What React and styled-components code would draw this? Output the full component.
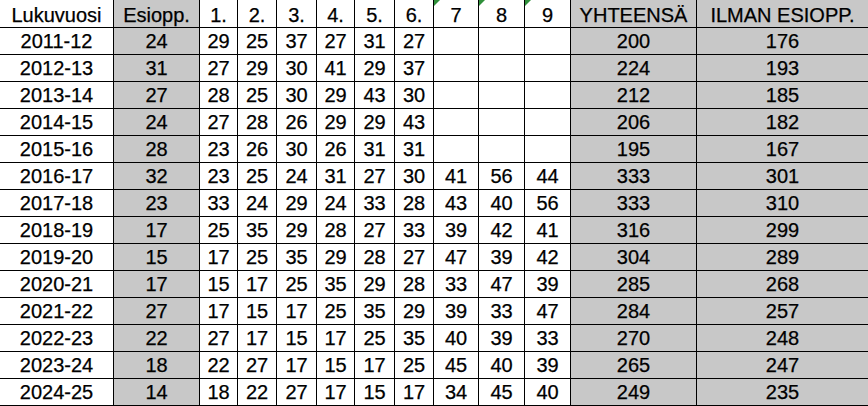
import styled, { createGlobalStyle } from "styled-components";

const GlobalStyle = createGlobalStyle`
  html, body {
    margin: 0;
    padding: 0;
    background: #ffffff;
  }
  body {
    font-family: "Liberation Sans", Arial, sans-serif;
  }
`;

const COLUMNS = [113, 85, 37, 38, 39, 37, 39, 38, 44, 45, 45, 125, 171];

const Sheet = styled.div`
  display: grid;
  grid-template-columns: ${COLUMNS.map((w) => `${w}px`).join(" ")};
  grid-template-rows: 27px;
  grid-auto-rows: 26px;
  gap: 1px;
  padding-bottom: 1px;
  width: 868px;
  background: #000;
`;

const Cell = styled.div`
  position: relative;
  background: ${(props) => (props.shaded ? "#c8c8c8" : "#ffffff")};
  color: #000;
  font-size: 20px;
  line-height: ${(props) => (props.head ? "24px" : "26px")};
  padding-top: ${(props) => (props.head ? "3px" : "0")};
  text-align: center;
  white-space: nowrap;
  overflow: hidden;
  box-sizing: border-box;
  -webkit-text-stroke: 0.25px #000;
`;

// the little green corner Excel puts on "number stored as text" cells
const Flag = styled.span`
  position: absolute;
  top: 0;
  left: 0;
  width: 0;
  height: 0;
  border-top: 6px solid #2f8f3a;
  border-right: 6px solid transparent;
`;

const headers = [
  "Lukuvuosi",
  "Esiopp.",
  "1.",
  "2.",
  "3.",
  "4.",
  "5.",
  "6.",
  "7",
  "8",
  "9",
  "YHTEENSÄ",
  "ILMAN ESIOPP.",
];

const rows = [
  ["2011-12", 24, 29, 25, 37, 27, 31, 27, "", "", "", 200, 176],
  ["2012-13", 31, 27, 29, 30, 41, 29, 37, "", "", "", 224, 193],
  ["2013-14", 27, 28, 25, 30, 29, 43, 30, "", "", "", 212, 185],
  ["2014-15", 24, 27, 28, 26, 29, 29, 43, "", "", "", 206, 182],
  ["2015-16", 28, 23, 26, 30, 26, 31, 31, "", "", "", 195, 167],
  ["2016-17", 32, 23, 25, 24, 31, 27, 30, 41, 56, 44, 333, 301],
  ["2017-18", 23, 33, 24, 29, 24, 33, 28, 43, 40, 56, 333, 310],
  ["2018-19", 17, 25, 35, 29, 28, 27, 33, 39, 42, 41, 316, 299],
  ["2019-20", 15, 17, 25, 35, 29, 28, 27, 47, 39, 42, 304, 289],
  ["2020-21", 17, 15, 17, 25, 35, 29, 28, 33, 47, 39, 285, 268],
  ["2021-22", 27, 17, 15, 17, 25, 35, 29, 39, 33, 47, 284, 257],
  ["2022-23", 22, 27, 17, 15, 17, 25, 35, 40, 39, 33, 270, 248],
  ["2023-24", 18, 22, 27, 17, 15, 17, 25, 45, 40, 39, 265, 247],
  ["2024-25", 14, 18, 22, 27, 17, 15, 17, 34, 45, 40, 249, 235],
];

const isShaded = (i) => i === 1 || i >= 11;
const isFlagged = (i) => i >= 8 && i <= 10;

const App = () => {
  return (
    <>
      <GlobalStyle />
      <Sheet>
        {headers.map((h, i) => (
          <Cell key={`h-${i}`} head shaded={isShaded(i)}>
            {isFlagged(i) && <Flag />}
            {h}
          </Cell>
        ))}
        {rows.map((row, r) =>
          row.map((v, i) => (
            <Cell key={`${r}-${i}`} shaded={isShaded(i)}>
              {v}
            </Cell>
          ))
        )}
      </Sheet>
    </>
  );
};

export default App;
